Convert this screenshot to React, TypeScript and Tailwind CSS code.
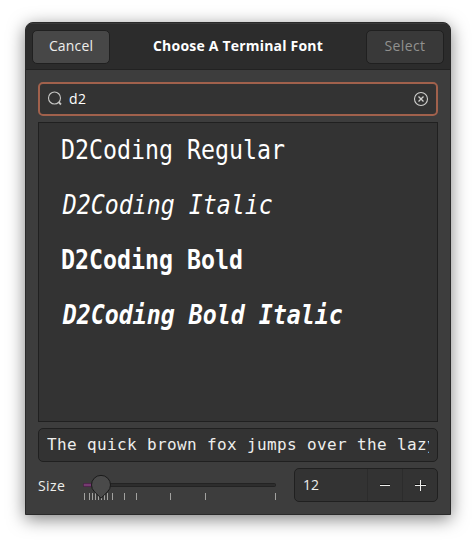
import type { ReactNode } from 'react';

const fonts = [
  { name: 'D2Coding Regular', style: '' },
  { name: 'D2Coding Italic', style: 'italic pl-[2px]' },
  { name: 'D2Coding Bold', style: 'font-bold' },
  { name: 'D2Coding Bold Italic', style: 'font-bold italic pl-[2px]' },
];

const ticks = [0.5, 5.5, 8.5, 11.5, 14.5, 17.5, 20.5, 23.5, 28.5, 40.5, 52.5, 86.5, 121.5, 191.5];

function Label({ children, className = '' }: { children: ReactNode; className?: string }) {
  return <span className={`whitespace-nowrap leading-5 ${className}`}>{children}</span>;
}

function SearchIcon() {
  return (
    <svg width="16" height="16" viewBox="0 0 16 16" fill="none" stroke="#c6c6c4">
      <circle cx="7.5" cy="7" r="6" strokeWidth="1.1" />
      <path d="M11.7 11.2 14 13.5" strokeWidth="1.8" />
    </svg>
  );
}

function ClearIcon() {
  return (
    <svg width="16" height="16" viewBox="0 0 16 16" fill="none" stroke="#d0d0ce">
      <circle cx="8" cy="8" r="6.5" strokeWidth="1.1" />
      <path d="M5.5 5.5 10.5 10.5M10.5 5.5 5.5 10.5" strokeWidth="1.3" />
    </svg>
  );
}

function SizeSlider() {
  return (
    <svg className="ml-[16px] shrink-0" width="196" height="34" viewBox="0 0 196 34">
      <rect x="2.5" y="15.5" width="192" height="3" rx="1" fill="#2d2d2d" stroke="#232323" />
      <rect x="2.5" y="15.5" width="16" height="3" rx="1" fill="#753b70" stroke="#50254d" />
      {ticks.map((x) => (
        <path key={x} d={`M${x + 3} 25V32`} stroke="#a2a2a0" />
      ))}
      <path
        d="M20 30.2L13.4 23.7A9.5 9.5 0 1 1 26.6 23.7Z"
        fill="#4a4a4a"
        stroke="#1b1b1b"
        strokeLinejoin="round"
      />
    </svg>
  );
}

export default function App() {
  return (
    <div className="h-[543px] w-[476px] overflow-hidden bg-white pt-[22px] pl-[25px] font-['Open_Sans',sans-serif] text-[14px] text-[#eeeeec]">
      <div className="flex h-[493px] w-[426px] flex-col overflow-hidden rounded-t-[8px] border border-[#2a2a2a] bg-[#3d3d3d] shadow-[0_4px_17px_0_rgba(0,0,0,0.5)]">
        <header className="flex h-[47px] shrink-0 items-center justify-between border-t border-b border-t-[#3a3a3a] border-b-[#222222] bg-[#2c2c2c] px-[6px]">
          <button className="flex h-[34px] w-[78px] items-center justify-center rounded-[5px] border border-[#202020] bg-[#474747] pb-[2px]">
            <Label className="tracking-[0.15px]">Cancel</Label>
          </button>
          <Label className="pb-[2px] font-bold tracking-[0.2px] text-white">Choose A Terminal Font</Label>
          <button className="flex h-[34px] w-[78px] items-center justify-center rounded-[5px] border border-[#202020] bg-[#393939] pb-[2px] text-[#91918f]">
            <Label className="tracking-[0.4px]">Select</Label>
          </button>
        </header>

        <main className="flex flex-col px-[12px] pt-[12px]">
          <div className="flex h-[34px] items-center rounded-[5px] border-2 border-[#a1614c] bg-[#333333] px-[7px]">
            <SearchIcon />
            <Label className="ml-[6px] flex-1 tracking-[0.5px] text-white">d2</Label>
            <ClearIcon />
          </div>

          <ul className="mt-[6px] h-[300px] border border-[#202020] bg-[#333333] pl-[22px] font-['DejaVu_Sans_Mono',monospace] text-[27px] text-white">
            {fonts.map((font) => (
              <li
                key={font.name}
                className={`h-[55px] w-max origin-left scale-x-[.861] leading-[53px] whitespace-nowrap ${font.style}`}
              >
                {font.name}
              </li>
            ))}
          </ul>

          <div className="mt-[6px] h-[34px] rounded-[5px] border border-[#202020] bg-[#333333] px-[8px] font-['DejaVu_Sans_Mono',monospace] text-[16px] tracking-[0.37px]">
            <div className="overflow-hidden leading-[32px] whitespace-nowrap">
              The quick brown fox jumps over the lazy dog.
            </div>
          </div>

          <div className="mt-[6px] flex h-[34px] items-center">
            <Label className="w-[27px] pt-[2px] tracking-[0.4px]">Size</Label>
            <SizeSlider />
            <div className="ml-auto flex h-[34px] w-[144px] items-center rounded-[5px] border border-[#202020] bg-[#333333]">
              <Label className="flex-1 pl-[8px]">12</Label>
              <button className="flex h-[32px] w-[35px] items-center justify-center border-l border-[#2c2c2c]">
                <svg width="16" height="16" viewBox="0 0 16 16" stroke="#eeeeec">
                  <path d="M3 7.5H13" stroke="#111111" />
                  <path d="M3 8.5H13" />
                </svg>
              </button>
              <button className="flex h-[32px] w-[35px] items-center justify-center border-l border-[#2c2c2c]">
                <svg width="16" height="16" viewBox="0 0 16 16" stroke="#eeeeec">
                  <path d="M3 7.5H14" stroke="#111111" />
                  <path d="M3 8.5H14M8.5 3V14" />
                </svg>
              </button>
            </div>
          </div>
        </main>
      </div>
    </div>
  );
}
